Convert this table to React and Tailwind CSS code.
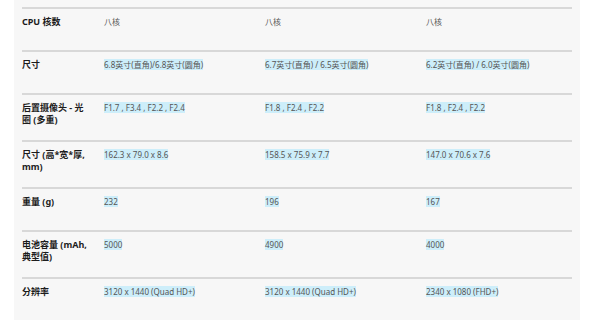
const rows = [
  { label: "CPU 核数", values: ["八核", "八核", "八核"], plain: true },
  { label: "尺寸", values: ["6.8英寸(直角)/6.8英寸(圆角)", "6.7英寸(直角) / 6.5英寸(圆角)", "6.2英寸(直角) / 6.0英寸(圆角)"] },
  { label: "后置摄像头 - 光圈 (多重)", values: ["F1.7 , F3.4 , F2.2 , F2.4", "F1.8 , F2.4 , F2.2", "F1.8 , F2.4 , F2.2"] },
  { label: "尺寸 (高*宽*厚, mm)", values: ["162.3 x 79.0 x 8.6", "158.5 x 75.9 x 7.7", "147.0 x 70.6 x 7.6"] },
  { label: "重量 (g)", values: ["232", "196", "167"] },
  { label: "电池容量 (mAh, 典型值)", values: ["5000", "4900", "4000"] },
  { label: "分辨率", values: ["3120 x 1440 (Quad HD+)", "3120 x 1440 (Quad HD+)", "2340 x 1080 (FHD+)"] },
];

export default function App() {
  return (
    <div className="w-[600px] h-[320px] bg-white overflow-hidden" style={{ fontFamily: '"Noto Sans", "Noto Sans CJK SC", sans-serif' }}>
      <div className="ml-[14px] w-[566px] h-full bg-[#f7f7f7] px-[8px] pt-[7px]">
        {rows.map((row) => (
          <div
            key={row.label}
            className="grid grid-cols-[82px_161px_161px_1fr] min-h-[43px] border-t-2 border-[#d8d8d8] pt-[7px] pb-[14px]"
          >
            <div className="pr-[16px] text-[9px] leading-[12px] font-bold text-[#1c1c1c]">{row.label}</div>
            {row.values.map((v, i) => (
              <div key={i} className="text-[8px] leading-[12px] text-[#555]">
                <span className={row.plain ? "" : "bg-[#cdeefa]"}>{v}</span>
              </div>
            ))}
          </div>
        ))}
      </div>
    </div>
  );
}
